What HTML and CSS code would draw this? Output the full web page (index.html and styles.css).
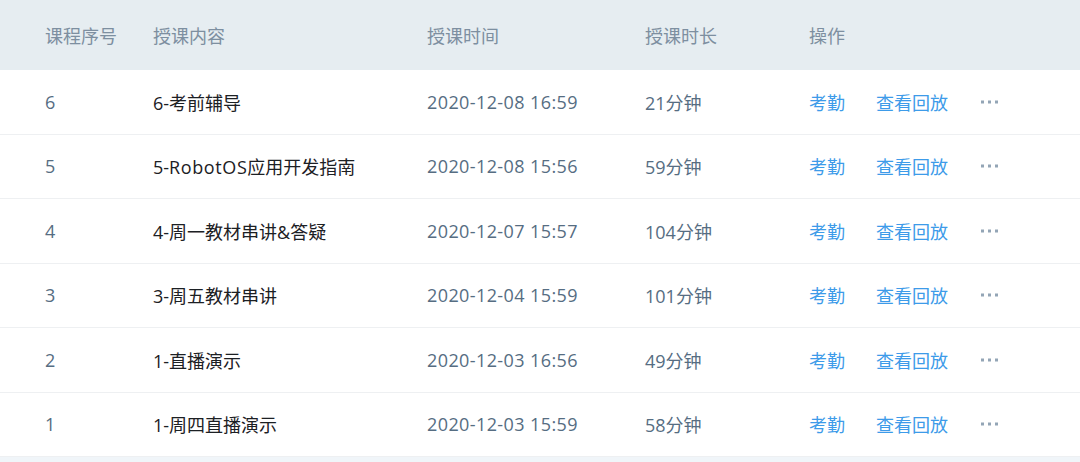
FILE: index.html
```html
<!DOCTYPE html>
<html lang="zh-CN">
<head>
<meta charset="utf-8">
<link rel="stylesheet" href="styles.css">
</head>
<body>
<div class="table">
  <div class="row head">
    <div class="c1">课程序号</div>
    <div class="c2">授课内容</div>
    <div class="c3 hd">授课时间</div>
    <div class="c4">授课时长</div>
    <div class="c5">操作</div>
  </div>
  <div class="row">
    <div class="c1">6</div>
    <div class="c2 title">6-考前辅导</div>
    <div class="c3">2020-12-08 16:59</div>
    <div class="c4">21分钟</div>
    <div class="c5 ops"><span class="link">考勤</span><span class="link">查看回放</span><svg class="more" width="18" height="4" viewBox="0 0 18 4"><rect x="0" y="0.5" width="3" height="3"/><rect x="7" y="0.5" width="3" height="3"/><rect x="14" y="0.5" width="3" height="3"/></svg></div>
  </div>
  <div class="row">
    <div class="c1">5</div>
    <div class="c2 title">5-<span class="lat">RobotOS</span>应用开发指南</div>
    <div class="c3">2020-12-08 15:56</div>
    <div class="c4">59分钟</div>
    <div class="c5 ops"><span class="link">考勤</span><span class="link">查看回放</span><svg class="more" width="18" height="4" viewBox="0 0 18 4"><rect x="0" y="0.5" width="3" height="3"/><rect x="7" y="0.5" width="3" height="3"/><rect x="14" y="0.5" width="3" height="3"/></svg></div>
  </div>
  <div class="row">
    <div class="c1">4</div>
    <div class="c2 title">4-周一教材串讲&amp;答疑</div>
    <div class="c3">2020-12-07 15:57</div>
    <div class="c4">104分钟</div>
    <div class="c5 ops"><span class="link">考勤</span><span class="link">查看回放</span><svg class="more" width="18" height="4" viewBox="0 0 18 4"><rect x="0" y="0.5" width="3" height="3"/><rect x="7" y="0.5" width="3" height="3"/><rect x="14" y="0.5" width="3" height="3"/></svg></div>
  </div>
  <div class="row">
    <div class="c1">3</div>
    <div class="c2 title">3-周五教材串讲</div>
    <div class="c3">2020-12-04 15:59</div>
    <div class="c4">101分钟</div>
    <div class="c5 ops"><span class="link">考勤</span><span class="link">查看回放</span><svg class="more" width="18" height="4" viewBox="0 0 18 4"><rect x="0" y="0.5" width="3" height="3"/><rect x="7" y="0.5" width="3" height="3"/><rect x="14" y="0.5" width="3" height="3"/></svg></div>
  </div>
  <div class="row">
    <div class="c1">2</div>
    <div class="c2 title">1-直播演示</div>
    <div class="c3">2020-12-03 16:56</div>
    <div class="c4">49分钟</div>
    <div class="c5 ops"><span class="link">考勤</span><span class="link">查看回放</span><svg class="more" width="18" height="4" viewBox="0 0 18 4"><rect x="0" y="0.5" width="3" height="3"/><rect x="7" y="0.5" width="3" height="3"/><rect x="14" y="0.5" width="3" height="3"/></svg></div>
  </div>
  <div class="row">
    <div class="c1">1</div>
    <div class="c2 title">1-周四直播演示</div>
    <div class="c3">2020-12-03 15:59</div>
    <div class="c4">58分钟</div>
    <div class="c5 ops"><span class="link">考勤</span><span class="link">查看回放</span><svg class="more" width="18" height="4" viewBox="0 0 18 4"><rect x="0" y="0.5" width="3" height="3"/><rect x="7" y="0.5" width="3" height="3"/><rect x="14" y="0.5" width="3" height="3"/></svg></div>
  </div>
</div>
</body>
</html>
```

FILE: styles.css
```css
html, body {
  margin: 0;
  padding: 0;
}
body {
  width: 1080px;
  height: 462px;
  overflow: hidden;
  background: #f0f5f9;
  font-family: "Open Sans", "Noto Sans CJK SC", sans-serif;
  font-size: 18px;
}
.table {
  background: #ffffff;
}
.row {
  display: grid;
  grid-template-columns: 108px 274px 218px 164px 1fr;
  align-items: center;
  padding-left: 45px;
  height: 63.5px;
  border-bottom: 1px solid #eef0f2;
  color: #566d82;
  white-space: nowrap;
}
.row.head {
  height: 70px;
  border-bottom: none;
  background: #e6edf1;
  color: #7d8fa0;
}
.c3 {
  letter-spacing: 0.4px;
}
.c3.hd {
  letter-spacing: 0;
}
.title {
  color: #1c2024;
}
.lat {
  letter-spacing: 0.6px;
}
.ops {
  display: flex;
  align-items: center;
}
.link {
  color: #3d9be9;
  margin-right: 31px;
}
.link + .link {
  margin-right: 33px;
}
.more {
  fill: #93a5b6;
  display: block;
}
```
